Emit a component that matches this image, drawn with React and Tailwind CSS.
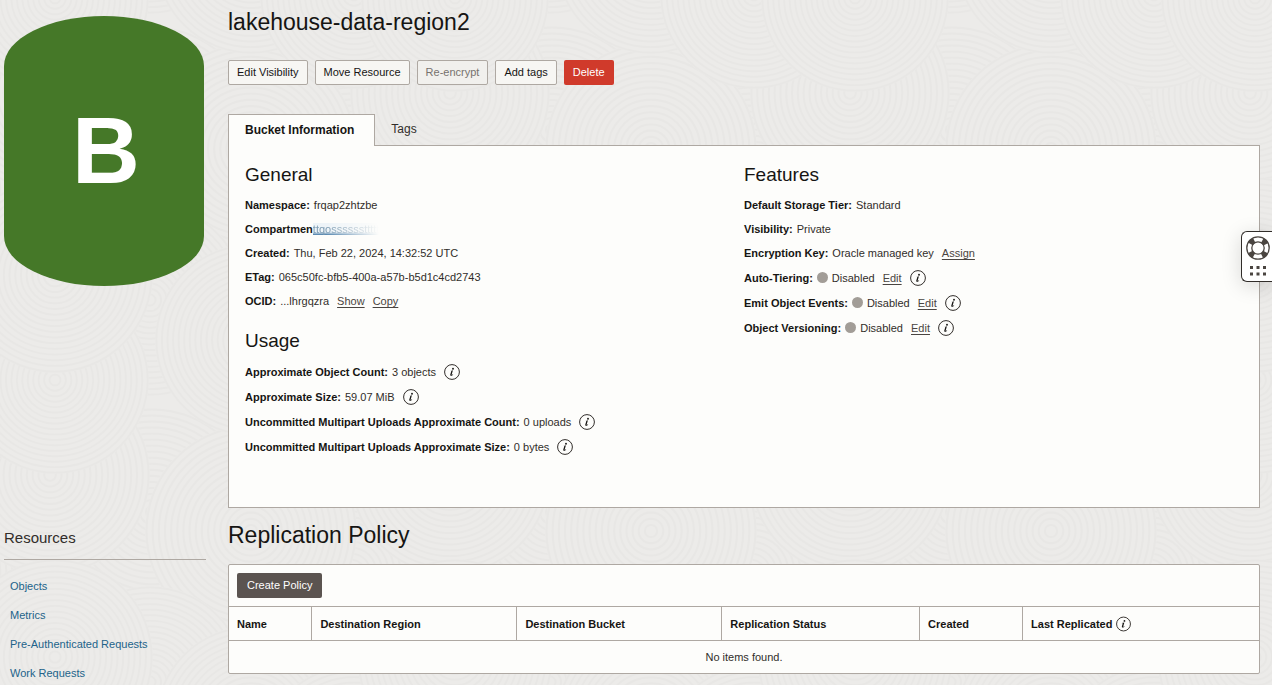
import React from 'react';

const discs = [
  { x: 152, y: 130, r: 104 },
  { x: 352, y: 190, r: 104 },
  { x: 251, y: 149, r: 106 },
  { x: 150, y: 300, r: 96 },
  { x: 251, y: 340, r: 96 },
  { x: 50, y: 93, r: 100 },
  { x: 354, y: 377, r: 94 },
  { x: 55, y: 380, r: 94 },
  { x: 55, y: 275, r: 98 },
];

const rings = Array.from({ length: 17 }).map((_, i) => i + 1);

const generalLinks = ['Show', 'Copy'];

const usage = [
  { label: 'Approximate Object Count:', value: '3 objects' },
  { label: 'Approximate Size:', value: '59.07 MiB' },
  { label: 'Uncommitted Multipart Uploads Approximate Count:', value: '0 uploads' },
  { label: 'Uncommitted Multipart Uploads Approximate Size:', value: '0 bytes' },
];

const toggles = ['Auto-Tiering:', 'Emit Object Events:', 'Object Versioning:'];

const resources = ['Objects', 'Metrics', 'Pre-Authenticated Requests', 'Work Requests'];

const columns = [
  { title: 'Name', width: 'w-[8.1%]' },
  { title: 'Destination Region', width: 'w-[19.9%]' },
  { title: 'Destination Bucket', width: 'w-[19.9%]' },
  { title: 'Replication Status', width: 'w-[19.2%]' },
  { title: 'Created', width: 'w-[10%]' },
  { title: 'Last Replicated', width: 'w-[22.9%]', info: true },
];

function Backdrop() {
  return (
    <svg className="absolute inset-0 w-full h-full" aria-hidden="true">
      <defs>
        <g id="disc">
          <circle r="100" fill="#ecebe9" />
          {rings.map((n) => (
            <circle key={n} r={n * 5.8} fill="none" stroke="#e8e7e5" strokeWidth="1.8" />
          ))}
        </g>
        <pattern id="swirls" width="400" height="382" patternUnits="userSpaceOnUse">
          <rect width="400" height="382" fill="#ecebe9" />
          {discs.map((d) =>
            [-400, 0, 400].map((dx) =>
              [-382, 0, 382].map((dy) => (
                <use
                  key={`${d.x}-${d.y}-${dx}-${dy}`}
                  href="#disc"
                  transform={`translate(${d.x + dx} ${d.y + dy}) scale(${d.r / 100})`}
                />
              ))
            )
          )}
        </pattern>
      </defs>
      <rect width="100%" height="100%" fill="url(#swirls)" />
    </svg>
  );
}

function InfoButton({ label, small }) {
  return (
    <button type="button" aria-label={`About ${label}`} className="shrink-0">
      <svg width={small ? 15 : 16} height="16" viewBox="0 0 16 16" fill="none">
        <circle cx="8" cy="8" r="7.4" stroke="#312d2a" strokeWidth="1" />
        <circle cx="9" cy="4.7" r="0.95" fill="#161513" />
        <path
          d="M6.2 6.9c.9-.1 1.7-.3 2.7-.6L7.7 10.6c-.1.4.1.5.4.3.3-.2.5-.4.8-.8l.3.2c-.6 1-1.2 1.5-2 1.5-.8 0-1.1-.5-.9-1.3l.9-3c.1-.3 0-.4-.3-.4h-.7z"
          fill="#161513"
        />
      </svg>
    </button>
  );
}

function Row({ label, tall, children }) {
  return (
    <div className={`flex items-center ${tall ? 'h-[25px]' : 'h-6'}`}>
      <dt className="font-bold mr-1 text-[#161513]">{label}</dt>
      <dd className="flex items-center gap-2">{children}</dd>
    </div>
  );
}

function TextLink({ children }) {
  return (
    <a href="#" className="underline underline-offset-2 text-[#4a4541]">
      {children}
    </a>
  );
}

function SectionTitle({ children }) {
  return <h2 className="text-[19px] leading-8 text-[#161513]">{children}</h2>;
}

function ActionButton({ children, disabled }) {
  return (
    <button
      type="button"
      disabled={disabled}
      className="h-[25px] px-2 pb-0.5 rounded-xs border border-[#aea8a2] bg-[#f7f6f3] text-[#161513] disabled:bg-[#f1f0ed] disabled:text-[#77726e]"
    >
      {children}
    </button>
  );
}

function Sidebar() {
  return (
    <aside className="w-[202px] shrink-0 pt-4">
      <div className="w-[200px] h-[270px] pl-1 rounded-[100px/50px] bg-[#457828] flex items-center justify-center text-white text-[94px] font-bold">
        B
      </div>
      <h2 className="mt-60 h-[34px] border-b border-[#aea8a2] text-[15px] leading-6 text-[#312d2a]">Resources</h2>
      <nav className="mt-4 pl-1.5 flex flex-col items-start gap-[9px] leading-5">
        {resources.map((item) => (
          <a key={item} href="#" className="text-[#22638a]">
            {item}
          </a>
        ))}
      </nav>
    </aside>
  );
}

function BucketInformation() {
  return (
    <section className="border border-[#aea8a2] bg-[#fdfdfb] px-4 pt-[13px] pb-12 grid grid-cols-2">
      <div>
        <SectionTitle>General</SectionTitle>
        <dl className="mt-0.5">
          <Row label="Namespace:">frqap2zhtzbe</Row>
          <div className="flex items-center h-6">
            <dt className="font-bold text-[#161513]">Compartmen</dt>
            <dd className="h-3 leading-3 whitespace-nowrap text-[#7f9db3] bg-linear-to-b from-[#eef4f8] from-75% to-[#3f77a3] mask-r-from-20% mask-r-to-100%">
              ttqossssssttttt
            </dd>
          </div>
          <Row label="Created:">Thu, Feb 22, 2024, 14:32:52 UTC</Row>
          <Row label="ETag:">065c50fc-bfb5-400a-a57b-b5d1c4cd2743</Row>
          <Row label="OCID:">
            ...lhrgqzra
            {generalLinks.map((link) => (
              <TextLink key={link}>{link}</TextLink>
            ))}
          </Row>
        </dl>
        <div className="mt-3">
          <SectionTitle>Usage</SectionTitle>
        </div>
        <dl className="mt-0.5">
          {usage.map((item) => (
            <Row key={item.label} label={item.label} tall>
              {item.value}
              <InfoButton label={item.label} />
            </Row>
          ))}
        </dl>
      </div>
      <div>
        <SectionTitle>Features</SectionTitle>
        <dl className="mt-0.5">
          <Row label="Default Storage Tier:">Standard</Row>
          <Row label="Visibility:">Private</Row>
          <Row label="Encryption Key:">
            Oracle managed key
            <TextLink>Assign</TextLink>
          </Row>
          {toggles.map((label) => (
            <Row key={label} label={label} tall>
              <span className="flex items-center gap-1">
                <span className="size-[11px] rounded-full bg-[#a29d97]" />
                Disabled
              </span>
              <TextLink>Edit</TextLink>
              <InfoButton label={label} />
            </Row>
          ))}
        </dl>
      </div>
    </section>
  );
}

function ReplicationPolicy() {
  return (
    <section>
      <h2 className="mt-[11px] text-[23px] leading-8 text-[#161513]">Replication Policy</h2>
      <div className="mt-[13px] border border-[#aea8a2] rounded-xs bg-[#fdfdfb]">
        <div className="p-2 flex">
          <button type="button" className="h-[25px] px-2.5 pb-0.5 rounded-xs bg-[#5b5450] text-white">
            Create Policy
          </button>
        </div>
        <table className="w-full table-fixed border-separate border-spacing-0">
          <thead>
            <tr>
              {columns.map((col) => (
                <th
                  key={col.title}
                  className={`${col.width} h-[34px] px-2 text-left font-bold text-[#161513] border-t border-r last:border-r-0 border-[#aea8a2]`}
                >
                  <span className="flex items-center gap-1">
                    {col.title}
                    {col.info && <InfoButton label={col.title} small />}
                  </span>
                </th>
              ))}
            </tr>
          </thead>
          <tbody>
            <tr>
              <td colSpan={6} className="h-[33px] text-center border-t border-[#aea8a2]">
                No items found.
              </td>
            </tr>
          </tbody>
        </table>
      </div>
    </section>
  );
}

function HelpWidget() {
  return (
    <button
      type="button"
      aria-label="Help"
      className="absolute right-0 top-[231px] w-[31px] h-[51px] rounded-l-md border border-r-0 border-[#312d2a] bg-white shadow-[0_4px_20px_rgba(0,0,0,0.15)] flex flex-col items-center pt-1 pl-px"
    >
      <svg width="24" height="24" viewBox="0 0 24 24" fill="none">
        <circle cx="12" cy="12" r="8.7" stroke="#4a4541" strokeWidth="5.6" strokeDasharray="5.2 8.47" strokeDashoffset="-4.23" />
        <circle cx="12" cy="12" r="11.2" stroke="#4a4541" strokeWidth="1.3" />
        <circle cx="12" cy="12" r="6.2" stroke="#4a4541" strokeWidth="1.3" />
      </svg>
      <svg className="mt-1.5" width="16" height="10" viewBox="0 0 16 10" fill="#4a4541">
        <path d="M0 0h3v3H0zM6.5 0h3v3h-3zM13 0h3v3h-3zM0 6.5h3v3H0zM6.5 6.5h3v3h-3zM13 6.5h3v3h-3z" />
      </svg>
    </button>
  );
}

export default function App() {
  return (
    <div className="relative min-h-screen overflow-hidden bg-[#ecebe9] font-['Liberation_Sans',Arial,sans-serif] text-[11px] leading-4 text-[#312d2a]">
      <Backdrop />
      <div className="relative flex gap-[22px] pl-1 pr-3">
        <Sidebar />
        <main className="flex-1 min-w-0 pt-1.5">
          <h1 className="text-[23px] leading-8 text-[#161513]">lakehouse-data-region2</h1>
          <div className="mt-[22px] flex gap-[7px]">
            <ActionButton>Edit Visibility</ActionButton>
            <ActionButton>Move Resource</ActionButton>
            <ActionButton disabled>Re-encrypt</ActionButton>
            <ActionButton>Add tags</ActionButton>
            <button type="button" className="h-[25px] px-[9px] pb-0.5 rounded-xs bg-[#d03a2b] text-white">
              Delete
            </button>
          </div>
          <div role="tablist" className="relative z-10 mt-[29px] -mb-px flex text-[12px]">
            <button
              type="button"
              role="tab"
              aria-selected="true"
              className="h-8 pl-4 pr-5 pb-0.5 border border-b-0 border-[#aea8a2] bg-[#fdfdfb] font-bold text-[#161513]"
            >
              Bucket Information
            </button>
            <button type="button" role="tab" aria-selected="false" className="h-[30px] px-4">
              Tags
            </button>
          </div>
          <BucketInformation />
          <ReplicationPolicy />
        </main>
      </div>
      <HelpWidget />
    </div>
  );
}
